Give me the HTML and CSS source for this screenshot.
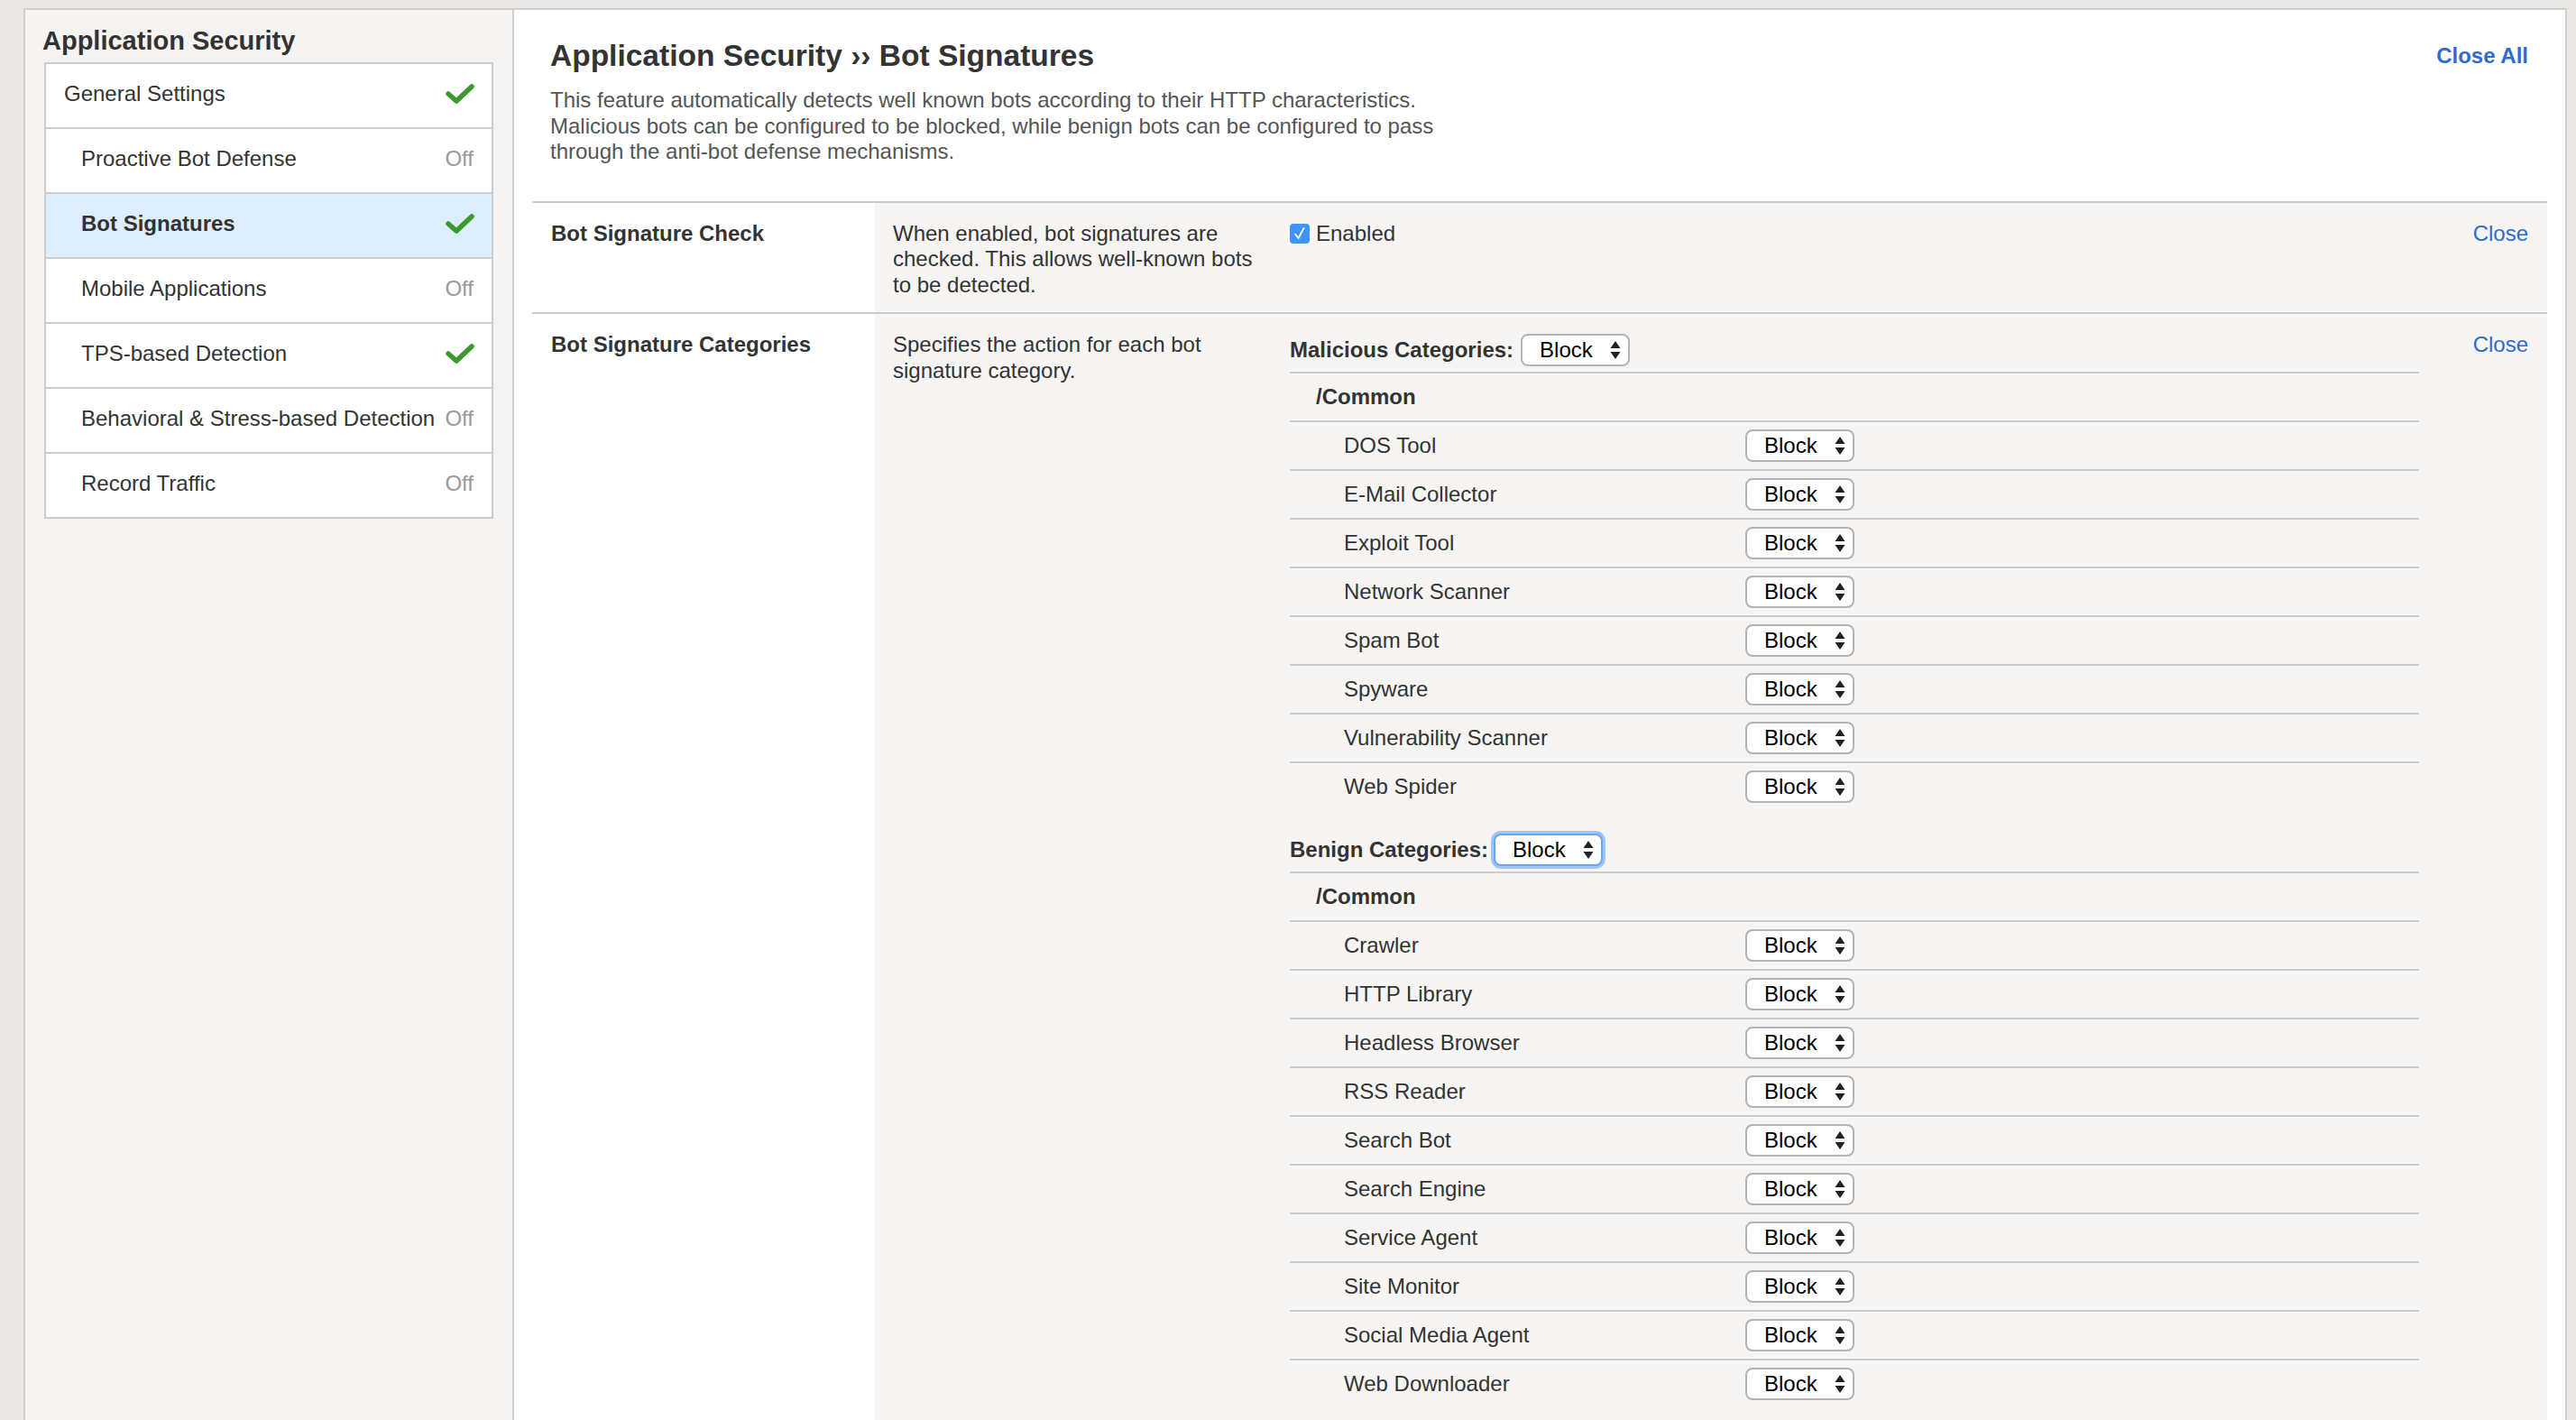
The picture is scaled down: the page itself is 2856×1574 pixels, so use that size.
FILE: index.html
```html
<!DOCTYPE html>
<html>
<head>
<meta charset="utf-8">
<link rel="stylesheet" href="styles.css">
</head>
<body>
<div class="frame">
  <aside class="sidebar">
    <h2 class="side-title">Application Security</h2>
    <ul class="nav">
      <li class="nav-item"><span>General Settings</span><svg class="check" viewBox="0 0 32 24"><path d="M3 12 L12 20 L29 4"/></svg></li>
      <li class="nav-item sub"><span>Proactive Bot Defense</span><span class="off">Off</span></li>
      <li class="nav-item sub active"><span>Bot Signatures</span><svg class="check" viewBox="0 0 32 24"><path d="M3 12 L12 20 L29 4"/></svg></li>
      <li class="nav-item sub"><span>Mobile Applications</span><span class="off">Off</span></li>
      <li class="nav-item sub"><span>TPS-based Detection</span><svg class="check" viewBox="0 0 32 24"><path d="M3 12 L12 20 L29 4"/></svg></li>
      <li class="nav-item sub"><span>Behavioral &amp; Stress-based Detection</span><span class="off">Off</span></li>
      <li class="nav-item sub"><span>Record Traffic</span><span class="off">Off</span></li>
    </ul>
  </aside>
  <main class="main">
    <header class="head">
      <div class="head-text">
        <h1 class="title">Application Security ›› Bot Signatures</h1>
        <p class="intro">This feature automatically detects well known bots according to their HTTP characteristics. Malicious bots can be configured to be blocked, while benign bots can be configured to pass through the anti-bot defense mechanisms.</p>
      </div>
      <a class="close-all">Close All</a>
    </header>

    <section class="sec">
      <div class="sec-label">Bot Signature Check</div>
      <div class="sec-desc">When enabled, bot signatures are checked. This allows well-known bots to be detected.</div>
      <div class="sec-ctrl">
        <label class="cb"><span class="box"><svg viewBox="0 0 22 22"><path d="M6 11.5 L9.5 16 L15.5 5"/></svg></span>Enabled</label>
        <a class="close">Close</a>
      </div>
    </section>

    <section class="sec grow">
      <div class="sec-label">Bot Signature Categories</div>
      <div class="sec-desc">Specifies the action for each bot signature category.</div>
      <div class="sec-ctrl">
        <div class="cats">
          <div class="cat-head"><b>Malicious Categories:</b><span class="sel">Block<svg viewBox="0 0 12 22"><path d="M6 1 L11.5 9 L0.5 9 Z M0.5 13 L11.5 13 L6 21 Z"/></svg></span></div>
          <div class="grp">/Common</div>
          <div class="row"><span class="nm">DOS Tool</span><span class="sel">Block<svg viewBox="0 0 12 22"><path d="M6 1 L11.5 9 L0.5 9 Z M0.5 13 L11.5 13 L6 21 Z"/></svg></span></div>
          <div class="row"><span class="nm">E-Mail Collector</span><span class="sel">Block<svg viewBox="0 0 12 22"><path d="M6 1 L11.5 9 L0.5 9 Z M0.5 13 L11.5 13 L6 21 Z"/></svg></span></div>
          <div class="row"><span class="nm">Exploit Tool</span><span class="sel">Block<svg viewBox="0 0 12 22"><path d="M6 1 L11.5 9 L0.5 9 Z M0.5 13 L11.5 13 L6 21 Z"/></svg></span></div>
          <div class="row"><span class="nm">Network Scanner</span><span class="sel">Block<svg viewBox="0 0 12 22"><path d="M6 1 L11.5 9 L0.5 9 Z M0.5 13 L11.5 13 L6 21 Z"/></svg></span></div>
          <div class="row"><span class="nm">Spam Bot</span><span class="sel">Block<svg viewBox="0 0 12 22"><path d="M6 1 L11.5 9 L0.5 9 Z M0.5 13 L11.5 13 L6 21 Z"/></svg></span></div>
          <div class="row"><span class="nm">Spyware</span><span class="sel">Block<svg viewBox="0 0 12 22"><path d="M6 1 L11.5 9 L0.5 9 Z M0.5 13 L11.5 13 L6 21 Z"/></svg></span></div>
          <div class="row"><span class="nm">Vulnerability Scanner</span><span class="sel">Block<svg viewBox="0 0 12 22"><path d="M6 1 L11.5 9 L0.5 9 Z M0.5 13 L11.5 13 L6 21 Z"/></svg></span></div>
          <div class="row last"><span class="nm">Web Spider</span><span class="sel">Block<svg viewBox="0 0 12 22"><path d="M6 1 L11.5 9 L0.5 9 Z M0.5 13 L11.5 13 L6 21 Z"/></svg></span></div>

          <div class="cat-head benign"><b>Benign Categories:</b><span class="sel focus">Block<svg viewBox="0 0 12 22"><path d="M6 1 L11.5 9 L0.5 9 Z M0.5 13 L11.5 13 L6 21 Z"/></svg></span></div>
          <div class="grp">/Common</div>
          <div class="row"><span class="nm">Crawler</span><span class="sel">Block<svg viewBox="0 0 12 22"><path d="M6 1 L11.5 9 L0.5 9 Z M0.5 13 L11.5 13 L6 21 Z"/></svg></span></div>
          <div class="row"><span class="nm">HTTP Library</span><span class="sel">Block<svg viewBox="0 0 12 22"><path d="M6 1 L11.5 9 L0.5 9 Z M0.5 13 L11.5 13 L6 21 Z"/></svg></span></div>
          <div class="row"><span class="nm">Headless Browser</span><span class="sel">Block<svg viewBox="0 0 12 22"><path d="M6 1 L11.5 9 L0.5 9 Z M0.5 13 L11.5 13 L6 21 Z"/></svg></span></div>
          <div class="row"><span class="nm">RSS Reader</span><span class="sel">Block<svg viewBox="0 0 12 22"><path d="M6 1 L11.5 9 L0.5 9 Z M0.5 13 L11.5 13 L6 21 Z"/></svg></span></div>
          <div class="row"><span class="nm">Search Bot</span><span class="sel">Block<svg viewBox="0 0 12 22"><path d="M6 1 L11.5 9 L0.5 9 Z M0.5 13 L11.5 13 L6 21 Z"/></svg></span></div>
          <div class="row"><span class="nm">Search Engine</span><span class="sel">Block<svg viewBox="0 0 12 22"><path d="M6 1 L11.5 9 L0.5 9 Z M0.5 13 L11.5 13 L6 21 Z"/></svg></span></div>
          <div class="row"><span class="nm">Service Agent</span><span class="sel">Block<svg viewBox="0 0 12 22"><path d="M6 1 L11.5 9 L0.5 9 Z M0.5 13 L11.5 13 L6 21 Z"/></svg></span></div>
          <div class="row"><span class="nm">Site Monitor</span><span class="sel">Block<svg viewBox="0 0 12 22"><path d="M6 1 L11.5 9 L0.5 9 Z M0.5 13 L11.5 13 L6 21 Z"/></svg></span></div>
          <div class="row"><span class="nm">Social Media Agent</span><span class="sel">Block<svg viewBox="0 0 12 22"><path d="M6 1 L11.5 9 L0.5 9 Z M0.5 13 L11.5 13 L6 21 Z"/></svg></span></div>
          <div class="row last"><span class="nm">Web Downloader</span><span class="sel">Block<svg viewBox="0 0 12 22"><path d="M6 1 L11.5 9 L0.5 9 Z M0.5 13 L11.5 13 L6 21 Z"/></svg></span></div>
        </div>
        <a class="close">Close</a>
      </div>
    </section>
  </main>
</div>
</body>
</html>
```

FILE: styles.css
```css
html, body {
  margin: 0;
  padding: 0;
  height: 100%;
  overflow: hidden;
}
body {
  background: #e9e8e4;
  font-family: "Liberation Sans", Arial, Helvetica, sans-serif;
  font-size: 24px;
  color: #333;
}
.frame {
  display: flex;
  margin: 9px 10px 0 26px;
  border: 2px solid #cfcecb;
  border-bottom: none;
  min-height: calc(100vh - 9px);
  box-sizing: border-box;
}
.sidebar {
  width: 542px;
  flex: none;
  box-sizing: border-box;
  background: #f5f4f2;
  border-right: 2px solid #cfcecb;
  padding: 18px 21px 0 21px;
}
.side-title {
  margin: 0 0 7px -2px;
  font-size: 29px;
  line-height: 33px;
  font-weight: bold;
  color: #333;
}
.nav {
  list-style: none;
  margin: 0;
  padding: 0;
  background: #fff;
  border: 2px solid #cccccc;
}
.nav-item {
  display: flex;
  align-items: center;
  justify-content: space-between;
  box-sizing: border-box;
  height: 72px;
  padding: 0 20px 4px 20px;
  border-bottom: 2px solid #cccccc;
  line-height: 28px;
}
.nav-item:last-child { border-bottom: none; height: 70px; }
.nav-item.sub { padding-left: 39px; }
.nav-item.active {
  background: #dcedfb;
  font-weight: bold;
}
.off { color: #999; }
.check {
  width: 32px;
  height: 24px;
  margin-right: -1px;
}
.check path {
  fill: none;
  stroke: #3a9b2c;
  stroke-width: 5.5;
  stroke-linecap: round;
  stroke-linejoin: round;
}

.main {
  flex: 1;
  display: flex;
  flex-direction: column;
  background: #fff;
  padding: 0 20px;
}
.head {
  display: flex;
  justify-content: space-between;
  align-items: flex-start;
  padding: 31px 21px 40px 20px;
}
.title {
  margin: 0;
  font-size: 33.5px;
  line-height: 39px;
  font-weight: bold;
  color: #333;
}
.intro {
  margin: 16px 0 0;
  max-width: 1010px;
  color: #555;
  line-height: 28.5px;
}
.close-all {
  color: #2f6ad0;
  font-weight: bold;
  margin-top: 6px;
  line-height: 28px;
}

.sec {
  display: flex;
  border-top: 2px solid #cccccc;
}
.sec.grow { flex: 1; }
.sec-label {
  width: 380px;
  box-sizing: border-box;
  padding: 20px 21px;
  font-weight: bold;
  background: #fff;
  line-height: 28.5px;
}
.sec-desc {
  width: 440px;
  box-sizing: border-box;
  padding: 20px 0 16px 20px;
  background: #f6f5f3;
  line-height: 28.5px;
}
.sec-ctrl {
  flex: 1;
  display: flex;
  justify-content: space-between;
  align-items: flex-start;
  background: #f6f5f3;
  padding: 20px 21px 40px 20px;
  line-height: 28.5px;
}
.close {
  color: #2f6ad0;
}
.cb {
  display: flex;
  align-items: center;
}
.cb .box {
  width: 22px;
  height: 22px;
  border-radius: 4px;
  background: #3d95f7;
  margin-right: 7px;
  display: flex;
}
.cb .box svg { width: 22px; height: 22px; }
.cb .box path {
  fill: none;
  stroke: #fff;
  stroke-width: 1.8;
  stroke-linecap: round;
  stroke-linejoin: round;
}

.cats {
  width: 1252px;
  margin-top: 2px;
}
.cat-head {
  display: flex;
  align-items: center;
  padding-bottom: 6px;
  border-bottom: 2px solid #cccccc;
}
.cat-head b { margin-right: 8px; }
.cat-head.benign { margin-top: 26px; }
.cat-head.benign b { margin-right: 6px; }
.grp {
  height: 52px;
  display: flex;
  align-items: center;
  padding-left: 29px;
  font-weight: bold;
  border-bottom: 2px solid #cccccc;
}
.row {
  height: 52px;
  display: flex;
  align-items: center;
  border-bottom: 2px solid #cccccc;
}
.row.last { border-bottom: none; }
.nm {
  width: 445px;
  padding-left: 60px;
}
.sel {
  box-sizing: border-box;
  width: 121px;
  height: 36px;
  display: inline-flex;
  align-items: center;
  justify-content: space-between;
  padding: 0 8px 0 19px;
  background: #fff;
  border: 2px solid #b3b3b3;
  border-radius: 8px;
  color: #000;
  font-size: 24px;
}
.sel svg {
  width: 12px;
  height: 22px;
}
.sel path { fill: #222; }
.sel.focus {
  border-color: #6aa6f2;
  box-shadow: 0 0 0 3px #9ec5f8;
}
```
